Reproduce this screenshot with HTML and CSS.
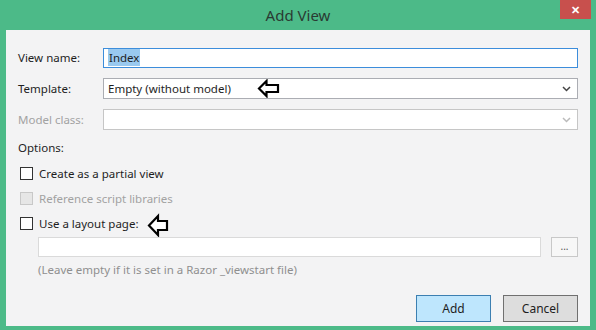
FILE: index.html
```html
<!DOCTYPE html>
<html lang="en">
<head>
    <meta charset="UTF-8">
    <title>Add View</title>
    <link rel="stylesheet" href="styles.css">
</head>
<body>
    <div class="window">
        <div class="titlebar">
            <span class="title">Add View</span>
            <div class="close">&#x2715;</div>
        </div>

        <div class="client">
            <div class="field">
                <label>View name:</label>
                <div class="input focus"><span class="selected">Index</span></div>
            </div>
            <div class="field">
                <label>Template:</label>
                <div class="input select">
                    <span>Empty (without model)</span>
                    <svg class="arrow-hint" width="23" height="19" viewBox="0 0 23 19"><polygon points="2,9.5 9.5,2 9.5,6 21,6 21,13 9.5,13 9.5,17" fill="#fff" stroke="#000" stroke-width="2.2"/></svg>
                    <svg class="chev" width="9" height="6" viewBox="0 0 9 6"><polyline points="1,1 4.5,4.5 8,1" fill="none" stroke="#444" stroke-width="1.5"/></svg>
                </div>
            </div>
            <div class="field">
                <label class="off">Model class:</label>
                <div class="input select disabled">
                    <svg class="chev" width="9" height="6" viewBox="0 0 9 6"><polyline points="1,1 4.5,4.5 8,1" fill="none" stroke="#bbb" stroke-width="1.5"/></svg>
                </div>
            </div>

            <div class="options">Options:</div>
            <div class="check"><span class="box"></span>Create as a partial view</div>
            <div class="check off"><span class="box"></span>Reference script libraries</div>
            <div class="check"><span class="box"></span>Use a layout page:
                <svg class="arrow-hint2" width="22" height="25" viewBox="0 0 22 25"><polygon points="2,12.5 11,3 11,8 20,8 20,17 11,17 11,22" fill="#fff" stroke="#000" stroke-width="2.2"/></svg>
            </div>
            <div class="layout-row">
                <div class="input faint"></div>
                <div class="browse">...</div>
            </div>
            <div class="hint">(Leave empty if it is set in a Razor _viewstart file)</div>

            <div class="buttons">
                <button class="primary">Add</button>
                <button>Cancel</button>
            </div>
        </div>
    </div>
</body>
</html>
```

FILE: styles.css
```css
* {
    margin: 0;
    padding: 0;
    box-sizing: border-box;
}

body {
    font-family: 'Noto Sans', 'Open Sans', sans-serif;
    font-size: 11.5px;
    color: #1e1e1e;
    background-color: #4cba88;
}

.window {
    width: 596px;
    height: 330px;
    background-color: #4cba88;
    display: flex;
    flex-direction: column;
}

.titlebar {
    height: 30px;
    position: relative;
    display: flex;
    justify-content: center;
    align-items: center;
}

.title {
    font-size: 15px;
    color: #2a3a33;
}

.close {
    position: absolute;
    top: 0;
    left: 560px;
    width: 31px;
    height: 19px;
    background-color: #c8504d;
    color: white;
    font-size: 11px;
    font-weight: bold;
    display: flex;
    justify-content: center;
    align-items: center;
}

.client {
    margin: 0 6px;
    height: 296px;
    background-color: #f3f3f4;
    padding: 17px 12px 0 12px;
    display: flex;
    flex-direction: column;
}

.field {
    display: flex;
    align-items: center;
    height: 21px;
    margin-bottom: 10px;
}

.field label {
    width: 85px;
}

.off {
    color: #a2a2a2;
}

.input {
    flex: 1;
    height: 21px;
    background-color: white;
    border: 1px solid #abadb3;
    display: flex;
    align-items: center;
    padding-left: 4px;
    position: relative;
}

.input.focus {
    border-color: #3c8ddb;
    height: 20px;
}

.selected {
    background-color: #99c9ef;
    padding: 1px 1px;
}

.input.disabled {
    border-color: #c6c6c6;
}

.input.faint {
    border-color: #dadada;
    height: 20px;
}

.chev {
    position: absolute;
    right: 6px;
    top: 7px;
}

.arrow-hint {
    position: absolute;
    left: 153px;
    top: 0;
}

.options {
    height: 16px;
}

.check {
    display: flex;
    align-items: center;
    height: 16px;
    margin-top: 9px;
    padding-left: 2px;
    position: relative;
}

.box {
    width: 13px;
    height: 13px;
    border: 1px solid #333;
    background-color: white;
    margin-right: 6px;
}

.check.off .box {
    border-color: #c8c8c8;
    background-color: #e6e6e6;
}

.arrow-hint2 {
    position: absolute;
    left: 129px;
    top: -2px;
}

.layout-row {
    display: flex;
    margin-top: 6px;
    padding-left: 20px;
    gap: 10px;
}

.browse {
    width: 27px;
    height: 20px;
    border: 1px solid #c8c8c8;
    background-color: #f7f7f7;
    color: #555;
    font-size: 10px;
    text-align: center;
    line-height: 16px;
}

.hint {
    color: #8f8f8f;
    padding-left: 20px;
    margin-top: 5px;
}

.buttons {
    display: flex;
    justify-content: flex-end;
    gap: 12px;
    margin-top: 18px;
}

button {
    width: 75px;
    height: 27px;
    font-family: 'Noto Sans', 'Open Sans', sans-serif;
    font-size: 12px;
    color: #1e1e1e;
    background-color: #dddddd;
    border: 1px solid #707070;
}

button.primary {
    background-color: #bee6fd;
    border-color: #3c7fb1;
}
```
